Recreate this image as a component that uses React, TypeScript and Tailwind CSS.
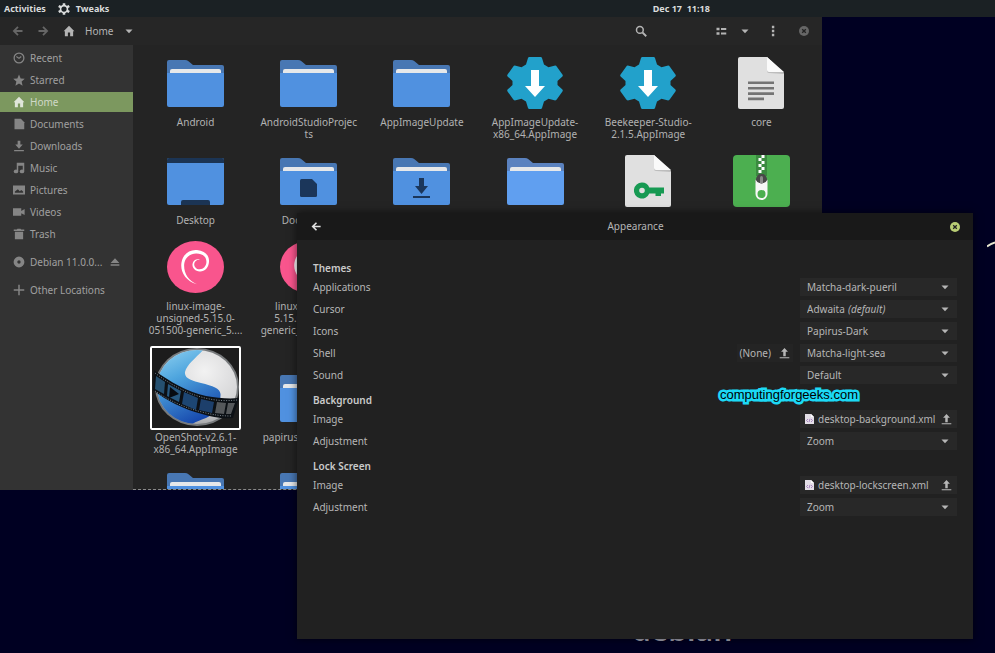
import type { ReactNode } from 'react'

/* ---------- small symbolic icons ---------- */

function Symbol({ children, className = 'size-3' }: { children: ReactNode; className?: string }) {
  return (
    <svg viewBox="0 0 16 16" fill="currentColor" className={`${className} shrink-0`} aria-hidden="true">
      {children}
    </svg>
  )
}

function IconArrow({ className }: { className: string }) {
  return (
    <Symbol className={className}>
      <path d="M14 8H3M8 2.500 2.500 8 8 13.500" fill="none" stroke="currentColor" strokeWidth="2.400" />
    </Symbol>
  )
}

function IconCaret() {
  return (
    <svg width="8" height="5" viewBox="0 0 8 5" fill="currentColor" className="shrink-0" aria-hidden="true">
      <path d="M.5.5h7L4 4.300z" />
    </svg>
  )
}

function IconHome() {
  return (
    <Symbol>
      <path d="M8 1 0.8 8.2h1.7V15h4v-5h3v5h4V8.2h1.7z" />
    </Symbol>
  )
}

function IconUpload() {
  return (
    <Symbol className="size-[11px]">
      <path d="M8 0 3 5.5h3.2V12h3.6V5.5H13zM1 13.4h14V15H1z" />
    </Symbol>
  )
}

function IconTweaks() {
  return (
    <svg viewBox="0 0 16 16" className="size-3 shrink-0" fill="none" stroke="currentColor" aria-hidden="true">
      <circle cx="8" cy="8" r="4.6" strokeWidth="2.2" />
      <path d="M8 .4v3.400M8 12.200v3.400M1 4l3.400 1.900M11.600 10.100 15 12M1 12l3.400-1.900M11.600 5.900 15 4" strokeWidth="3.400" />
    </svg>
  )
}

function IconClose({ className }: { className: string }) {
  return (
    <svg viewBox="0 0 10 10" className={`size-2.5 shrink-0 ${className}`} aria-hidden="true">
      <circle cx="5" cy="5" r="5" fill="currentColor" />
      <path d="m3.2 3.2 3.6 3.6M6.8 3.2 3.2 6.8" stroke="#222" strokeWidth="1.3" />
    </svg>
  )
}

function IconXml() {
  return (
    <svg viewBox="0 0 9 10" className="h-2.5 w-[9px] shrink-0" aria-hidden="true">
      <path d="M0 0h6l3 3v7H0z" fill="#e4dfe8" />
      <path d="M6 0v3h3z" fill="#fff" />
      <path d="M3 5 1.500 6.500 3 8M6 5l1.500 1.500L6 8M5 4.800 4 8.200" fill="none" stroke="#9a6fb8" strokeWidth=".8" />
    </svg>
  )
}

/* ---------- file icons ---------- */

function Folder({ light = false, children }: { light?: boolean; children?: ReactNode }) {
  return (
    <svg width="57" height="47" viewBox="0 0 57 47" aria-hidden="true">
      <path d="M0 2q0-2 2-2h16q2 0 3.500 1.200L26 5h29q2 0 2 2v12H0z" fill={light ? '#5b82bf' : '#4877b3'} />
      <path d="M3 15v-4q0-2 2-2h47q2 0 2 2v4z" fill="#e6e8ea" />
      <path d="M0 13h57v32q0 2-2 2H2q-2 0-2-2z" fill={light ? '#609ff0' : '#5091e0'} />
      {children}
    </svg>
  )
}

function DocumentsFolder() {
  return (
    <Folder>
      <path d="M20 22.500q0-1.500 1.500-1.500H32l5 5v11.500q0 1.500-1.500 1.500h-14q-1.500 0-1.500-1.500z" fill="#1b365a" />
    </Folder>
  )
}

function DownloadsFolder() {
  return (
    <Folder>
      <path d="M26 20h5v8h4l-6.500 8L22 28h4zM20 38h17v2H20z" fill="#1b365a" />
    </Folder>
  )
}

function DesktopFolder() {
  return (
    <svg width="57" height="47" viewBox="0 0 57 47" aria-hidden="true">
      <rect width="57" height="47" rx="2" fill="#5091e0" />
      <path d="M0 5V2q0-2 2-2h53q2 0 2 2v3zM14 47v-3q0-2 2-2h25q2 0 2 2v3z" fill="#1b3454" />
    </svg>
  )
}

function AppImageGear() {
  return (
    <svg width="56" height="52" viewBox="0 0 56 52" aria-hidden="true">
      <path
        d="M21 1q.3-1 1.300-1h11.400q1 0 1.300 1l2 6.500 4.500 2.700 6.700-1.600q1 0 1.500.8l5.900 8.400q.5.900-.2 1.600L50.500 24v4l4.900 4.600q.7.700.2 1.600l-5.900 8.400q-.5.800-1.500.8l-6.700-1.600-4.500 2.700-2 6.500q-.3 1-1.300 1H22.300q-1 0-1.300-1l-2-6.500-4.500-2.700-6.700 1.600q-1 0-1.500-.8L.4 34.200q-.5-.9.200-1.600L5.500 28v-4L.6 19.400q-.7-.7-.2-1.600l5.900-8.400q.5-.8 1.500-.8l6.700 1.600L19 7.500z"
        fill="#22a1cb"
      />
      <path d="M24 13h8v16h6L28 40 18 29h6z" fill="#fff" />
    </svg>
  )
}

function Sheet({ children }: { children: ReactNode }) {
  return (
    <svg width="46" height="52" viewBox="0 0 46 52" aria-hidden="true">
      <path d="M0 2q0-2 2-2h27l17 16v34q0 2-2 2H2q-2 0-2-2z" fill="#e0e0e0" />
      <path d="M29 1v13q0 2 2 2l15 1v-1z" fill="#bdbdbd" />
      <path d="M29 0v13q0 2 2 2h15z" fill="#fafafa" />
      {children}
    </svg>
  )
}

function TextSheet() {
  return (
    <Sheet>
      <path d="M10 24.500h26v2.600H10zM10 29.900h26v2.600H10zM10 35.300h26v2.600H10zM10 40.600h16v2.600H10z" fill="#747474" />
    </Sheet>
  )
}

function KeySheet() {
  return (
    <Sheet>
      <path
        fillRule="evenodd"
        d="M17 27.500a8 8 0 0 1 7.300 5H39v6h-3V41h-5.500v-2.500h-6.200a8 8 0 1 1-7.300-11zm0 5.200a2.800 2.800 0 1 0 0 5.600 2.800 2.800 0 0 0 0-5.600z"
        fill="#179a53"
      />
    </Sheet>
  )
}

function ZipArchive() {
  return (
    <svg width="57" height="52" viewBox="0 0 57 52" aria-hidden="true">
      <rect width="57" height="52" rx="4" fill="#4caf50" />
      <path d="M23 0h11v21H23z" fill="#3b8a40" />
      <path
        d="M28.500 0h3v3h-3zM25.500 3h3v3h-3zM28.500 6h3v3h-3zM25.500 9h3v3h-3zM28.500 12h3v3h-3zM25.500 15h3v3h-3z"
        fill="#fff"
      />
      <path d="M22.500 28q0-7 4-9h4q4 2 4 9z" fill="#474747" />
      <path
        fillRule="evenodd"
        d="M22.500 24.500q1.500 3 4 3.500h4q2.500-.5 4-3.500V39a6 6 0 0 1-12 0zm6 10.500a4 4 0 1 0 0 8 4 4 0 0 0 0-8z"
        fill="#f7f7f7"
      />
      <rect x="27" y="21" width="3" height="8" rx="1.500" fill="#8a8a8a" />
    </svg>
  )
}

function DebianPackage() {
  return (
    <svg width="57" height="52" viewBox="0 0 57 52" aria-hidden="true">
      <ellipse cx="28.500" cy="26" rx="28.500" ry="26" fill="#f9558d" />
      <path
        d="M30 43.200C18 40 13 30 14.500 21.500 16 12.500 23 8.300 30 9c8 .6 12.500 5.500 12 12-.5 6-4.500 9.800-9.300 9.500-4.700-.2-7.700-3.700-7.200-7.500.5-3.500 4-5.600 7.500-4.300-3.500-.2-5.700 1.800-5.800 4.300-.1 3 2.300 5.300 5.500 5.200 3.800-.1 6.500-3.200 6.700-7 .3-5.200-3.500-8.600-9.900-8.700-6.500-.2-11.500 4.200-12.300 10.500C16.500 31.500 21 39.500 30 43.200z"
        fill="#fff"
      />
    </svg>
  )
}

function OpenShot() {
  return (
    <svg width="91" height="84" viewBox="0 0 91 84" aria-hidden="true">
      <defs>
        <linearGradient id="osBlue" x1="0" y1="0" x2=".4" y2="1">
          <stop offset="0" stopColor="#9fdcf5" />
          <stop offset=".45" stopColor="#4ea5de" />
          <stop offset="1" stopColor="#1749ae" />
        </linearGradient>
        <radialGradient id="osWhite" cx=".6" cy=".3" r=".7">
          <stop offset="0" stopColor="#f2f2f2" />
          <stop offset=".7" stopColor="#d2d2d4" />
          <stop offset="1" stopColor="#8f9092" />
        </radialGradient>
        <clipPath id="osClip">
          <ellipse cx="47" cy="41" rx="40" ry="37" />
        </clipPath>
      </defs>
      <rect width="91" height="84" fill="#1c1c1c" />
      <ellipse cx="47" cy="41" rx="42" ry="39" fill="#777a7c" />
      <g clipPath="url(#osClip)">
        <rect width="91" height="84" fill="url(#osWhite)" />
        <path
          d="M55 2C46 12 37 18 35 26c-1 7 8 9 16 11 12 3 19 5 19.500 11C71 60 64 68 56 72c-7 3-12 4-16 8L0 84V0z"
          fill="url(#osBlue)"
        />
      </g>
      <path d="M4 24C20 36 38 46 56 50c12 2 22 3 33 2l-6 20c-11 1-21-1-31-4C33 63 17 55 3 44z" fill="#0c1015" />
      <path d="m6 30 9 6-1 12-9-5z" fill="#255070" />
      <path d="m18 38 13 7-2 11-12-6z" fill="#27587f" />
      <path d="m34 46 14 6-2 12-14-6z" fill="#1d4673" />
      <path d="m51 53 13 3-2 11-13-3z" fill="#1d3f6b" />
      <path d="m67 56 9 1-2 11-9-1zM78 57h7l-4 11h-5z" fill="#55585b" />
      <path d="m20 41 9 7-10 4z" fill="#070b10" />
      <path d="M5 27C21 39 38 48 55 52c12 3 22 3 32 2" fill="none" stroke="#7c868d" strokeWidth="1" strokeDasharray="1 1.500" />
      <path d="M5 45c15 10 30 17 47 21 11 3 20 4 30 4" fill="none" stroke="#7c868d" strokeWidth="1" strokeDasharray="1 1.500" />
      <rect x="1" y="1" width="89" height="82" rx="1" fill="none" stroke="#fff" strokeWidth="2" />
    </svg>
  )
}

/* ---------- data ---------- */

const places = [
  {
    label: 'Recent',
    icon: (
      <Symbol>
        <circle cx="8" cy="8" r="6.500" fill="none" stroke="currentColor" strokeWidth="1.700" />
        <path d="m4.500 6 3.500 2.500L11 6" fill="none" stroke="currentColor" strokeWidth="1.500" />
      </Symbol>
    ),
  },
  {
    label: 'Starred',
    icon: (
      <Symbol>
        <path d="m8 .8 2.200 5.100 5.500.5-4.200 3.700 1.300 5.400L8 12.600l-4.800 2.900 1.300-5.400L.3 6.400l5.500-.5z" />
      </Symbol>
    ),
  },
  { label: 'Home', icon: <IconHome />, active: true },
  { label: 'Documents', icon: <Symbol><path d="M2 1h8.500L15 5.500V15H2z" /></Symbol> },
  { label: 'Downloads', icon: <Symbol><path d="M6.200 1h3.600v5H13l-5 5.500L3 6h3.200zM1.500 13.200h13V15h-13z" /></Symbol> },
  {
    label: 'Music',
    icon: (
      <Symbol>
        <path d="M5 1h10v11h-2V5H7v7H5z" />
        <ellipse cx="4" cy="12.500" rx="3" ry="2.500" />
        <ellipse cx="12" cy="12.500" rx="3" ry="2.500" />
      </Symbol>
    ),
  },
  {
    label: 'Pictures',
    icon: (
      <Symbol>
        <path fillRule="evenodd" d="M0 2h16v12H0zM2.500 11.500h11V10l-2.500-2-2 1.500L6.500 7l-4 3z" />
      </Symbol>
    ),
  },
  { label: 'Videos', icon: <Symbol><path d="M0 3h11v3.500L15.500 4v8L11 9.500V13H0z" /></Symbol> },
  { label: 'Trash', icon: <Symbol><path d="M1 2h4l1-1h4l1 1h4v2H1zM2.500 5h11v10h-11z" /></Symbol> },
]

const fileRows = [
  {
    items: [
      { icon: <Folder />, name: 'Android' },
      { icon: <Folder />, name: 'AndroidStudioProjec\nts' },
      { icon: <Folder />, name: 'AppImageUpdate' },
      { icon: <AppImageGear />, name: 'AppImageUpdate-\nx86_64.AppImage' },
      { icon: <AppImageGear />, name: 'Beekeeper-Studio-\n2.1.5.AppImage' },
      { icon: <TextSheet />, name: 'core' },
    ],
  },
  {
    items: [
      { icon: <DesktopFolder />, name: 'Desktop' },
      { icon: <DocumentsFolder />, name: 'Documents' },
      { icon: <DownloadsFolder /> },
      { icon: <Folder light /> },
      { icon: <KeySheet /> },
      { icon: <ZipArchive /> },
    ],
  },
  {
    items: [
      { icon: <DebianPackage />, name: 'linux-image-\nunsigned-5.15.0-\n051500-generic_5....' },
      { icon: <DebianPackage />, name: 'linux-headers-\n5.15.0-051500-\ngeneric_5.15.0-051...' },
    ],
  },
  {
    tall: true,
    items: [
      { icon: <OpenShot />, name: 'OpenShot-v2.6.1-\nx86_64.AppImage' },
      { icon: <Folder />, name: 'papirus-icon-theme' },
    ],
  },
  { items: [{ icon: <Folder /> }, { icon: <Folder /> }] },
]

type Setting = {
  id: string
  label: string
  value: string
  hint?: string
  kind?: 'file'
  extra?: boolean
}

const sections: { title: string; rows: Setting[] }[] = [
  {
    title: 'Themes',
    rows: [
      { id: 'applications', label: 'Applications', value: 'Matcha-dark-pueril' },
      { id: 'cursor', label: 'Cursor', value: 'Adwaita', hint: '(default)' },
      { id: 'icons', label: 'Icons', value: 'Papirus-Dark' },
      { id: 'shell', label: 'Shell', value: 'Matcha-light-sea', extra: true },
      { id: 'sound', label: 'Sound', value: 'Default' },
    ],
  },
  {
    title: 'Background',
    rows: [
      { id: 'bg-image', label: 'Image', value: 'desktop-background.xml', kind: 'file' },
      { id: 'bg-adjustment', label: 'Adjustment', value: 'Zoom' },
    ],
  },
  {
    title: 'Lock Screen',
    rows: [
      { id: 'lock-image', label: 'Image', value: 'desktop-lockscreen.xml', kind: 'file' },
      { id: 'lock-adjustment', label: 'Adjustment', value: 'Zoom' },
    ],
  },
]

/* ---------- desktop ---------- */

function TopBar() {
  return (
    <header className="flex h-[17px] shrink-0 items-center bg-[#1b2124] text-[9px] font-bold text-[#dadcdc]">
      <nav className="flex w-[65%] items-center pl-1">
        <button type="button">Activities</button>
        <button type="button" className="ml-3 flex items-center gap-1.5">
          <IconTweaks />
          Tweaks
        </button>
      </nav>
      <time className="whitespace-pre pl-1.5">Dec 17  11:18</time>
    </header>
  )
}

function FilesToolbar() {
  return (
    <div className="flex h-7 shrink-0 items-center bg-[#262626] pl-3 pr-[13px] text-[#b4b4b4]">
      <button type="button" aria-label="Back" className="text-[#666]">
        <IconArrow className="size-3" />
      </button>
      <button type="button" aria-label="Forward" className="ml-[13px] text-[#666]">
        <IconArrow className="size-3 rotate-180" />
      </button>
      <button type="button" className="ml-3.5 flex items-center gap-2.5">
        <IconHome />
        <span className="mr-0.5">Home</span>
        <IconCaret />
      </button>
      <button type="button" aria-label="Search" className="ml-auto">
        <Symbol>
          <circle cx="6.500" cy="6.500" r="4.500" fill="none" stroke="currentColor" strokeWidth="2" />
          <path d="m10 10 5 5" stroke="currentColor" strokeWidth="2.400" />
        </Symbol>
      </button>
      <button type="button" aria-label="List view" className="ml-[68px]">
        <Symbol>
          <path d="M2 3.500h4v3.500H2zM8 4h7v2.500H8zM2 9.500h4V13H2zM8 10h7v2.500H8z" />
        </Symbol>
      </button>
      <button type="button" aria-label="View options" className="ml-3.5"><IconCaret /></button>
      <button type="button" aria-label="Menu" className="ml-[18px]">
        <Symbol><path d="M6.500 1h3.200v3.200H6.500zM6.500 6.400h3.200v3.200H6.500zM6.500 11.800h3.200V15H6.500z" /></Symbol>
      </button>
      <button type="button" aria-label="Close" className="ml-5"><IconClose className="text-[#666]" /></button>
    </div>
  )
}

function Sidebar() {
  return (
    <aside className="flex w-[133px] shrink-0 flex-col gap-0.5 bg-[#333] pt-[3px] text-[#a0a0a0]">
      {places.map((p) => (
        <a
          key={p.label}
          href="#"
          className={`flex h-5 shrink-0 items-center gap-[5px] px-[13px] ${p.active ? 'bg-[#7c985f] text-[#d0d8c8]' : ''}`}
        >
          <span className={p.active ? 'text-[#e0e6da]' : 'text-[#858585]'}>{p.icon}</span>
          {p.label}
        </a>
      ))}
      <a href="#" className="mt-1.5 flex h-5 items-center gap-[5px] px-[13px]">
        <Symbol className="size-3 text-[#858585]">
          <circle cx="8" cy="8" r="4.700" fill="none" stroke="currentColor" strokeWidth="5" />
        </Symbol>
        Debian 11.0.0...
        <Symbol className="ml-auto size-2.5 text-[#858585]"><path d="M8 2 1 9.500h14zM1 11.500h14v2.500H1z" /></Symbol>
      </a>
      <a href="#" className="mt-1.5 flex h-5 items-center gap-[5px] px-[13px]">
        <Symbol className="size-3 text-[#858585]"><path d="M7 1h2v6h6v2H9v6H7V9H1V7h6z" /></Symbol>
        Other Locations
      </a>
    </aside>
  )
}

function FilesWindow() {
  return (
    <section
      aria-label="Files"
      className="absolute bottom-[163px] left-0 right-[173px] top-0 flex flex-col overflow-hidden bg-[#242424]"
    >
      <FilesToolbar />
      <div className="flex min-h-0 flex-1">
        <Sidebar />
        <main className="min-w-0 flex-1 overflow-hidden border-b border-dashed border-[#8a8a8a] pl-1.5 pr-1 pt-1.5">
          <div className="flex flex-col gap-[9px]">
            {fileRows.map((row, r) => (
              <ul key={r} className="grid grid-cols-6">
                {row.items.map((item, i) => (
                  <li key={i} className="flex flex-col items-center">
                    <div className={`flex items-end ${row.tall ? 'h-[85px]' : 'h-16'}`}>
                      <div className="flex min-h-16 items-center">{item.icon}</div>
                    </div>
                    {'name' in item && (
                      <span className="mt-px whitespace-pre text-center leading-3 text-[#b2b2b2]">{item.name}</span>
                    )}
                  </li>
                ))}
              </ul>
            ))}
          </div>
        </main>
      </div>
    </section>
  )
}

/* ---------- tweaks ---------- */

function ComboBox({ row }: { row: Setting }) {
  return (
    <div className="grid w-[157px] items-center bg-[#282828]">
      <select
        id={row.id}
        className="col-start-1 row-start-1 h-[18px] w-full appearance-none bg-transparent pl-[7px] pr-5 outline-none"
      >
        <option>{row.value}</option>
      </select>
      {row.hint && (
        <em className="pointer-events-none col-start-1 row-start-1 ml-12">{row.hint}</em>
      )}
      <span className="pointer-events-none col-start-1 row-start-1 mr-2 justify-self-end">
        <IconCaret />
      </span>
    </div>
  )
}

function FileButton({ row }: { row: Setting }) {
  return (
    <button id={row.id} type="button" className="flex h-[18px] w-[157px] items-center gap-1 bg-[#282828] px-[5px]">
      <IconXml />
      <span className="flex-1 whitespace-nowrap text-left">{row.value}</span>
      <IconUpload />
    </button>
  )
}

function TweaksWindow() {
  return (
    <section
      aria-label="Tweaks"
      className="absolute bottom-3.5 left-[297px] right-[22px] top-[196px] flex flex-col bg-[#212121] text-[#b6b6b6] shadow-[0_0_8px_rgba(0,0,0,0.6)]"
    >
      <div className="grid h-[27px] shrink-0 grid-cols-[1fr_auto_1fr] items-center bg-[#191919] pl-3.5 pr-[13px]">
        <button type="button" aria-label="Back" className="justify-self-start text-[#e0e0e0]">
          <IconArrow className="size-[11px]" />
        </button>
        <h1>Appearance</h1>
        <button type="button" aria-label="Close" className="justify-self-end">
          <IconClose className="text-[#b9cd74]" />
        </button>
      </div>
      <div className="flex flex-col gap-1.5 px-4 pt-5">
        {sections.map((s) => (
          <section key={s.title}>
            <h2 className="h-4 font-semibold leading-4 text-[#cacaca]">{s.title}</h2>
            {s.rows.map((row) => (
              <div key={row.id} className="flex h-[22px] items-center gap-[7px]">
                <label htmlFor={row.id} className="mr-auto">{row.label}</label>
                {row.extra && (
                  <button type="button" className="flex h-[18px] items-center gap-2 bg-[#242424] px-[3px]">
                    (None)
                    <IconUpload />
                  </button>
                )}
                {row.kind === 'file' ? <FileButton row={row} /> : <ComboBox row={row} />}
              </div>
            ))}
          </section>
        ))}
      </div>
    </section>
  )
}

export default function App() {
  return (
    <div className="flex h-screen flex-col overflow-hidden bg-[#000022] font-['Noto_Sans',sans-serif] text-[10px]">
      <TopBar />
      <div className="relative flex-1">
        {/* wallpaper */}
        <span className="absolute bottom-2 left-[632px] text-[30px] font-semibold leading-none text-[#a9a9b8]">debian</span>
        <svg width="8" height="8" viewBox="0 0 8 8" className="absolute right-0 top-[223px]" aria-hidden="true">
          <path d="M0 6.500Q4 3.500 8 2.500" fill="none" stroke="#e6e6cf" strokeWidth="2" />
        </svg>

        <FilesWindow />
        <TweaksWindow />

        {/* watermark */}
        <span className="absolute right-[137px] top-[370px] font-['Liberation_Sans',sans-serif] text-[13px] leading-4 text-black [-webkit-text-stroke:5px_#1cd9f5] [paint-order:stroke_fill]">
          computingforgeeks.com
        </span>
      </div>
    </div>
  )
}
